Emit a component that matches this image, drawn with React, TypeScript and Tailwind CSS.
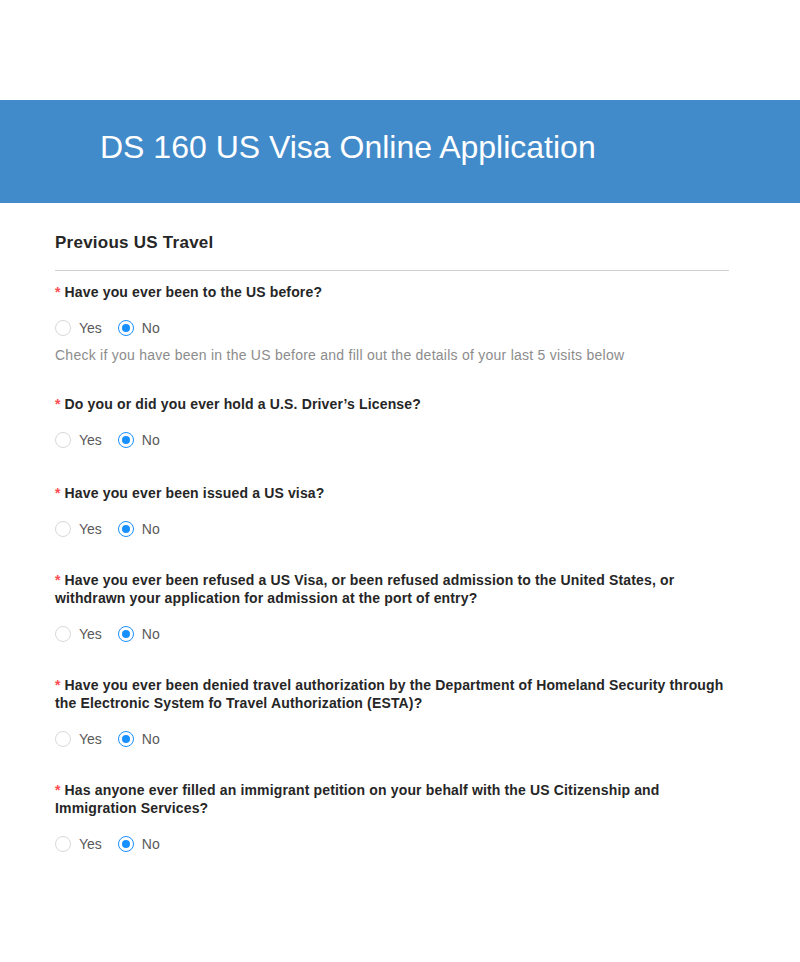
import { useState } from 'react'

type Question = {
  id: string
  label: string
  help?: string
  gap: string
}

const questions: Question[] = [
  {
    id: 'visited',
    label: 'Have you ever been to the US before?',
    help: 'Check if you have been in the US before and fill out the details of your last 5 visits below',
    gap: 'mt-[12px]',
  },
  { id: 'license', label: 'Do you or did you ever hold a U.S. Driver\u2019s License?', gap: 'mt-[30px]' },
  { id: 'issued', label: 'Have you ever been issued a US visa?', gap: 'mt-[34px]' },
  {
    id: 'refused',
    label:
      'Have you ever been refused a US Visa, or been refused admission to the United States, or withdrawn your application for admission at the port of entry?',
    gap: 'mt-[32px]',
  },
  {
    id: 'esta',
    label:
      'Have you ever been denied travel authorization by the Department of Homeland Security through the Electronic System fo Travel Authorization (ESTA)?',
    gap: 'mt-[32px]',
  },
  {
    id: 'petition',
    label:
      'Has anyone ever filled an immigrant petition on your behalf with the US Citizenship and Immigration Services?',
    gap: 'mt-[32px]',
  },
]

function Radio({ checked, label, onSelect }: { checked: boolean; label: string; onSelect: () => void }) {
  return (
    <label className="mr-[8px] flex cursor-pointer items-center" onClick={onSelect}>
      <span
        className={`flex h-[16px] w-[16px] items-center justify-center rounded-full border bg-white ${
          checked ? 'border-[#1890ff]' : 'border-[#d9d9d9]'
        }`}
      >
        {checked ? <span className="h-[8px] w-[8px] rounded-full bg-[#1890ff]" /> : null}
      </span>
      <span className="px-[8px] text-[14px] text-[#595959]">{label}</span>
    </label>
  )
}

function YesNo({ value, onChange }: { value: string; onChange: (v: string) => void }) {
  return (
    <div className="flex h-[20px] items-center">
      <Radio checked={value === 'yes'} label="Yes" onSelect={() => onChange('yes')} />
      <Radio checked={value === 'no'} label="No" onSelect={() => onChange('no')} />
    </div>
  )
}

export default function App() {
  const [answers, setAnswers] = useState<Record<string, string>>(
    Object.fromEntries(questions.map((q) => [q.id, 'no'])),
  )

  return (
    <div className="min-h-[962px] bg-white pt-[100px] font-['Liberation_Sans',Arial,sans-serif]">
      <div className="flex h-[103px] items-center bg-[#428bca] px-[100px] pb-[10px]">
        <h1 className="text-[32px] leading-none text-white">DS 160 US Visa Online Application</h1>
      </div>

      <div className="px-[55px] pt-[28px]">
        <h2 className="text-[17px] font-bold leading-[24px] tracking-[0.25px] text-[#262626]">
          Previous US Travel
        </h2>
        <div className="mt-[15px] mr-[16px] h-px bg-[#d0d0d0]" />

        <form className="w-[680px]">
          {questions.map((q) => (
            <div key={q.id} className={q.gap}>
              <div className="text-[14px] font-bold leading-[18px] tracking-[0.15px] text-[#262626]">
                <span className="mr-[4px] text-[#ff4d4f]">*</span>
                {q.label}
              </div>
              <div className="mt-[17px]">
                <YesNo
                  value={answers[q.id]}
                  onChange={(v) => setAnswers((prev) => ({ ...prev, [q.id]: v }))}
                />
              </div>
              {q.help ? (
                <p className="mt-[7px] text-[14px] leading-[20px] tracking-[0.25px] text-[#8c8c8c]">{q.help}</p>
              ) : null}
            </div>
          ))}
        </form>
      </div>
    </div>
  )
}
